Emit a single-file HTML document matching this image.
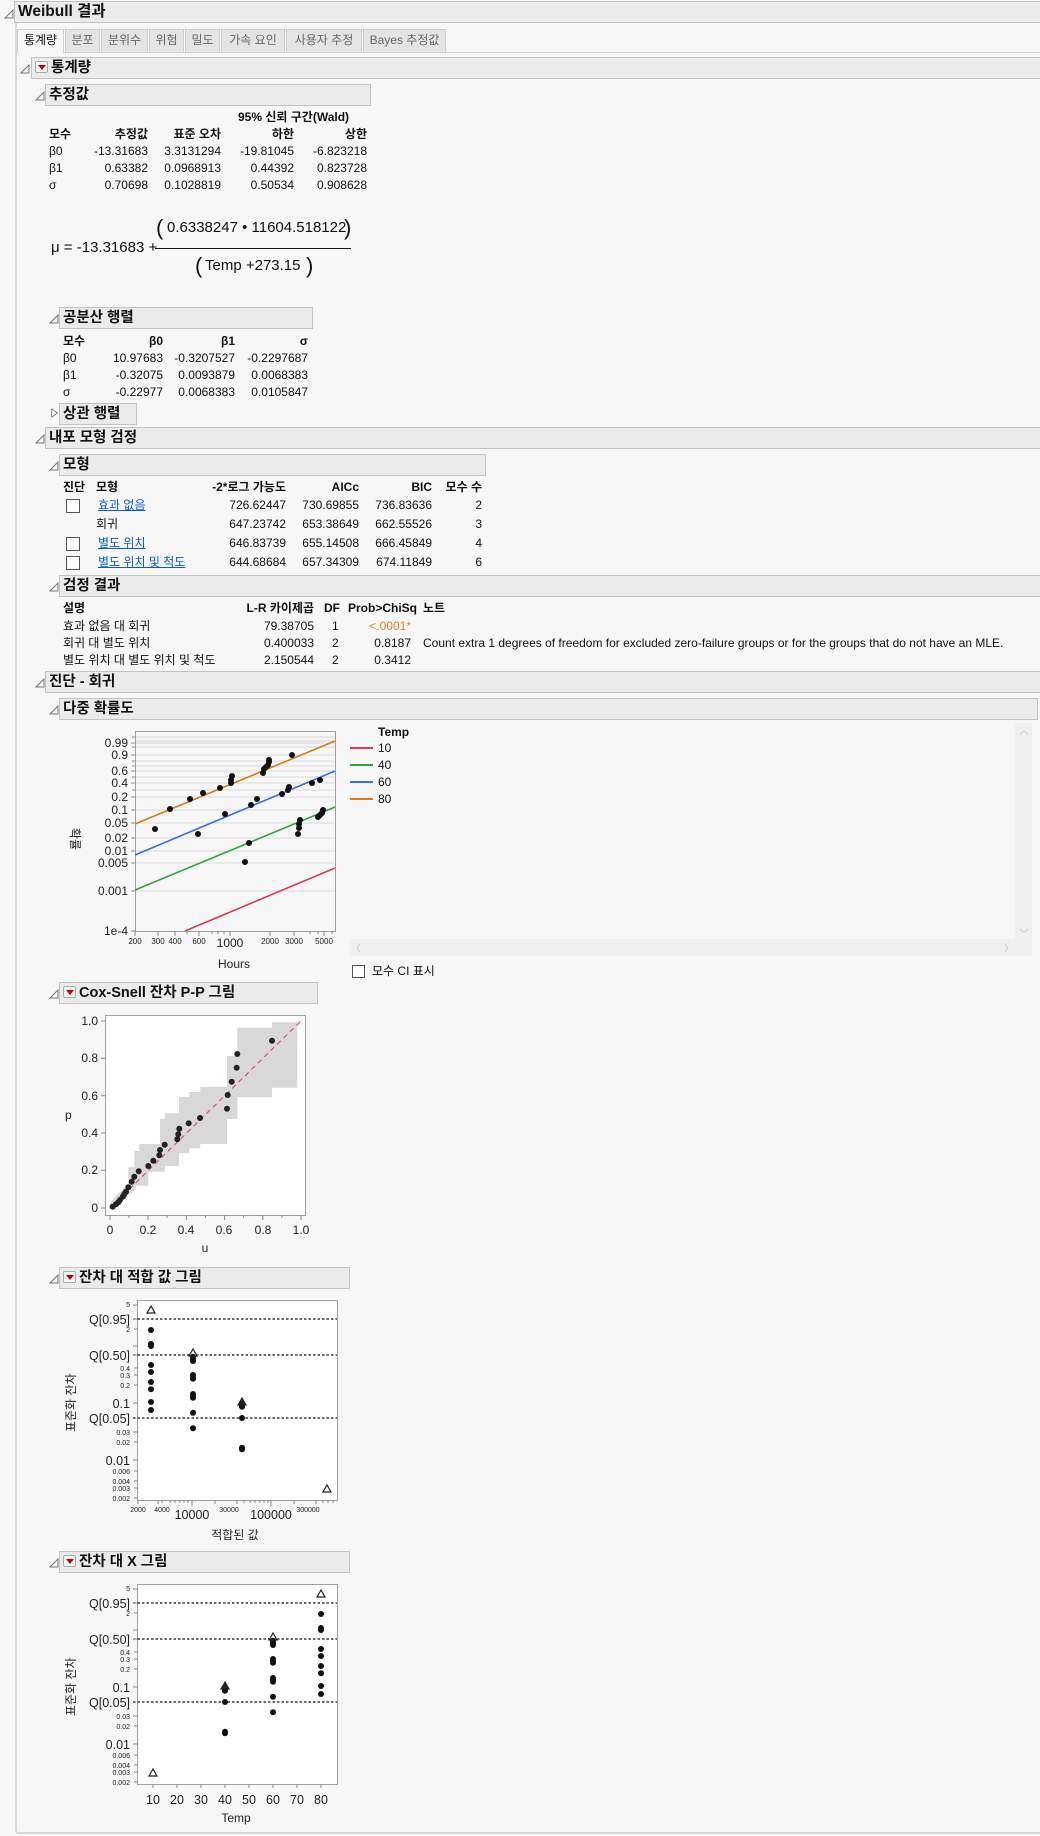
<!DOCTYPE html>
<html><head><meta charset="utf-8"><style>
*{margin:0;padding:0;box-sizing:border-box}
body{width:1040px;height:1836px;background:#f7f7f7;position:relative;overflow:hidden;font-family:"Liberation Sans","Noto Sans CJK KR",sans-serif;font-size:12px;color:#111}
.a{position:absolute;white-space:nowrap;line-height:16px}
.r{text-align:right;width:120px}
.c{text-align:center;width:60px}
.b{font-weight:bold}
.hd{position:absolute;height:22px;background:#ebebeb;border:1px solid #c3c3c3;font-weight:bold;font-size:14.5px;line-height:20px;padding-left:3px}
.tri{position:absolute;width:10px;height:10px}
.mb{display:inline-block;width:13px;height:12px;border:1px solid #aaa;background:#f8f8f8;border-radius:2px;position:relative;top:1px;margin-right:3px}
.mb:after{content:"";position:absolute;left:2px;top:3px;border-left:4px solid transparent;border-right:4px solid transparent;border-top:5px solid #c00000}
.tab{position:absolute;top:29px;height:23px;background:#e4e4e4;border:1px solid #cfcfcf;border-bottom:none;color:#666;font-size:12px;line-height:21px;text-align:center}
.cb{position:absolute;width:14px;height:14px;border:1px solid #555;background:#fff}
.lk{color:#0b5bd3;text-decoration:underline}
svg text{font-family:"Liberation Sans","Noto Sans CJK KR",sans-serif}
</style></head><body>

<div style="position:absolute;left:15px;top:22px;width:1030px;height:1812px;border-left:2px solid #d8d8d8;border-bottom:2px solid #d8d8d8;border-radius:0 0 0 4px"></div>
<div class="hd" style="left:14px;top:1px;width:1030px;height:22px;font-size:15.5px;line-height:20px">Weibull 결과</div>
<svg class="tri" style="left:4px;top:9px" viewBox="0 0 10 10"><path d="M9 1V9H1Z" fill="none" stroke="#777"/></svg>

<div style="position:absolute;left:17px;top:52px;width:1023px;border-top:1px solid #cfcfcf"></div>
<div class="tab" style="left:17px;width:47px;background:#f7f7f7;color:#111;height:24px">통계량</div>
<div class="tab" style="left:65px;width:35px">분포</div>
<div class="tab" style="left:101px;width:47px">분위수</div>
<div class="tab" style="left:149px;width:35px">위험</div>
<div class="tab" style="left:185px;width:35px">밀도</div>
<div class="tab" style="left:221px;width:64px">가속 요인</div>
<div class="tab" style="left:286px;width:76px">사용자 추정</div>
<div class="tab" style="left:363px;width:83px">Bayes 추정값</div>

<div class="hd" style="left:31px;top:57px;width:1012px"><span class="mb"></span>통계량</div>
<svg class="tri" style="left:20px;top:64px" viewBox="0 0 10 10"><path d="M9 1V9H1Z" fill="none" stroke="#777"/></svg>
<div class="hd" style="left:45px;top:84px;width:326px">추정값</div>
<svg class="tri" style="left:35px;top:91px" viewBox="0 0 10 10"><path d="M9 1V9H1Z" fill="none" stroke="#777"/></svg>

<div class="a b" style="left:238px;top:109px">95% 신뢰 구간(Wald)</div>
<div class="a b" style="left:49px;top:126px">모수</div>
<div class="a b r" style="left:28px;top:126px">추정값</div>
<div class="a b r" style="left:101px;top:126px">표준 오차</div>
<div class="a b r" style="left:174px;top:126px">하한</div>
<div class="a b r" style="left:247px;top:126px">상한</div>
<div class="a" style="left:49px;top:143px">β0</div><div class="a r" style="left:28px;top:143px">-13.31683</div><div class="a r" style="left:101px;top:143px">3.3131294</div><div class="a r" style="left:174px;top:143px">-19.81045</div><div class="a r" style="left:247px;top:143px">-6.823218</div>
<div class="a" style="left:49px;top:160px">β1</div><div class="a r" style="left:28px;top:160px">0.63382</div><div class="a r" style="left:101px;top:160px">0.0968913</div><div class="a r" style="left:174px;top:160px">0.44392</div><div class="a r" style="left:247px;top:160px">0.823728</div>
<div class="a" style="left:49px;top:177px">σ</div><div class="a r" style="left:28px;top:177px">0.70698</div><div class="a r" style="left:101px;top:177px">0.1028819</div><div class="a r" style="left:174px;top:177px">0.50534</div><div class="a r" style="left:247px;top:177px">0.908628</div>

<div class="a" style="left:51px;top:238px;font-size:15px;line-height:20px">μ = -13.31683 +</div>
<div style="position:absolute;left:155px;top:248px;width:196px;border-top:1px solid #111"></div>
<div class="a" style="left:156px;top:214px;font-size:22px;line-height:28px">(</div>
<div class="a" style="left:167px;top:218px;font-size:15px;line-height:20px">0.6338247 • 11604.518122</div>
<div class="a" style="left:344px;top:214px;font-size:22px;line-height:28px">)</div>
<div class="a" style="left:195px;top:252px;font-size:22px;line-height:28px">(</div>
<div class="a" style="left:205px;top:256px;font-size:15px;line-height:20px">Temp +273.15</div>
<div class="a" style="left:306px;top:252px;font-size:22px;line-height:28px">)</div>

<div class="hd" style="left:59px;top:307px;width:254px">공분산 행렬</div>
<svg class="tri" style="left:49px;top:314px" viewBox="0 0 10 10"><path d="M9 1V9H1Z" fill="none" stroke="#777"/></svg>
<div class="a b" style="left:63px;top:333px">모수</div><div class="a b r" style="left:43px;top:333px">β0</div><div class="a b r" style="left:115px;top:333px">β1</div><div class="a b r" style="left:188px;top:333px">σ</div>
<div class="a" style="left:63px;top:350px">β0</div><div class="a r" style="left:43px;top:350px">10.97683</div><div class="a r" style="left:115px;top:350px">-0.3207527</div><div class="a r" style="left:188px;top:350px">-0.2297687</div>
<div class="a" style="left:63px;top:367px">β1</div><div class="a r" style="left:43px;top:367px">-0.32075</div><div class="a r" style="left:115px;top:367px">0.0093879</div><div class="a r" style="left:188px;top:367px">0.0068383</div>
<div class="a" style="left:63px;top:384px">σ</div><div class="a r" style="left:43px;top:384px">-0.22977</div><div class="a r" style="left:115px;top:384px">0.0068383</div><div class="a r" style="left:188px;top:384px">0.0105847</div>

<div class="hd" style="left:59px;top:403px;width:78px">상관 행렬</div>
<svg class="tri" style="left:50px;top:408px" viewBox="0 0 10 12"><path d="M1 1L8 6L1 11Z" fill="none" stroke="#777"/></svg>

<div class="hd" style="left:45px;top:427px;width:998px">내포 모형 검정</div>
<svg class="tri" style="left:35px;top:434px" viewBox="0 0 10 10"><path d="M9 1V9H1Z" fill="none" stroke="#777"/></svg>
<div class="hd" style="left:59px;top:454px;width:427px">모형</div>
<svg class="tri" style="left:49px;top:461px" viewBox="0 0 10 10"><path d="M9 1V9H1Z" fill="none" stroke="#777"/></svg>

<div class="a b" style="left:63px;top:479px">진단</div><div class="a b" style="left:96px;top:479px">모형</div>
<div class="a b r" style="left:166px;top:479px">-2*로그 가능도</div><div class="a b r" style="left:239px;top:479px">AICc</div><div class="a b r" style="left:312px;top:479px">BIC</div><div class="a b r" style="left:362px;top:479px">모수 수</div>
<div class="cb" style="left:66px;top:499px"></div><div class="a lk" style="left:98px;top:497px">효과 없음</div><div class="a r" style="left:166px;top:497px">726.62447</div><div class="a r" style="left:239px;top:497px">730.69855</div><div class="a r" style="left:312px;top:497px">736.83636</div><div class="a r" style="left:362px;top:497px">2</div>
<div class="a" style="left:96px;top:516px">회귀</div><div class="a r" style="left:166px;top:516px">647.23742</div><div class="a r" style="left:239px;top:516px">653.38649</div><div class="a r" style="left:312px;top:516px">662.55526</div><div class="a r" style="left:362px;top:516px">3</div>
<div class="cb" style="left:66px;top:537px"></div><div class="a lk" style="left:98px;top:535px">별도 위치</div><div class="a r" style="left:166px;top:535px">646.83739</div><div class="a r" style="left:239px;top:535px">655.14508</div><div class="a r" style="left:312px;top:535px">666.45849</div><div class="a r" style="left:362px;top:535px">4</div>
<div class="cb" style="left:66px;top:556px"></div><div class="a lk" style="left:98px;top:554px">별도 위치 및 척도</div><div class="a r" style="left:166px;top:554px">644.68684</div><div class="a r" style="left:239px;top:554px">657.34309</div><div class="a r" style="left:312px;top:554px">674.11849</div><div class="a r" style="left:362px;top:554px">6</div>

<div class="hd" style="left:59px;top:575px;width:984px">검정 결과</div>
<svg class="tri" style="left:49px;top:582px" viewBox="0 0 10 10"><path d="M9 1V9H1Z" fill="none" stroke="#777"/></svg>
<div class="a b" style="left:63px;top:600px">설명</div><div class="a b r" style="left:194px;top:600px">L-R 카이제곱</div><div class="a b" style="left:324px;top:600px">DF</div><div class="a b" style="left:348px;top:600px">Prob&gt;ChiSq</div><div class="a b" style="left:423px;top:600px">노트</div>
<div class="a" style="left:63px;top:618px">효과 없음 대 회귀</div><div class="a r" style="left:194px;top:618px">79.38705</div><div class="a" style="left:332px;top:618px">1</div><div class="a r" style="left:291px;top:618px;color:#e8782a">&lt;.0001*</div>
<div class="a" style="left:63px;top:635px">회귀 대 별도 위치</div><div class="a r" style="left:194px;top:635px">0.400033</div><div class="a" style="left:332px;top:635px">2</div><div class="a r" style="left:291px;top:635px">0.8187</div><div class="a" style="left:423px;top:635px">Count extra 1 degrees of freedom for excluded zero-failure groups or for the groups that do not have an MLE.</div>
<div class="a" style="left:63px;top:652px">별도 위치 대 별도 위치 및 척도</div><div class="a r" style="left:194px;top:652px">2.150544</div><div class="a" style="left:332px;top:652px">2</div><div class="a r" style="left:291px;top:652px">0.3412</div>

<div class="hd" style="left:45px;top:671px;width:998px">진단 - 회귀</div>
<svg class="tri" style="left:35px;top:678px" viewBox="0 0 10 10"><path d="M9 1V9H1Z" fill="none" stroke="#777"/></svg>
<div class="hd" style="left:59px;top:698px;width:979px">다중 확률도</div>
<svg class="tri" style="left:49px;top:705px" viewBox="0 0 10 10"><path d="M9 1V9H1Z" fill="none" stroke="#777"/></svg>

<svg style="position:absolute;left:0;top:0" width="1040" height="1836">
<g stroke="#d9d9d9" stroke-width="1">
<path d="M135 737H335M135 741H335M135 743H335M135 747H335M135 755H335M135 761H335M135 766H335M135 771H335M135 777H335M135 783H335M135 790H335M135 797H335M135 810H335M135 823H335M135 838H335M135 851H335M135 863H335M135 891H335"/>
</g>
<rect x="135.5" y="731.5" width="200" height="200" fill="none" stroke="#a0a0a0"/>
<g stroke="#888"><path d="M131 743H135M131 755H135M131 771H135M131 783H135M131 797H135M131 810H135M131 823H135M131 838H135M131 851H135M131 863H135M131 891H135M131 931H135M132 737H135M132 747H135M132 761H135M132 766H135M132 777H135M132 790H135M158 931V936M175 931V936M199 931V936M230 931V936M270 931V936M294 931V936M324 931V936M135 931V936M187 931v3M212 931v3M218 931v3M224 931v3M310 931v3M318 931v3M332 931v3"/></g>
<g font-size="12" fill="#222" text-anchor="end">
<text x="128" y="747">0.99</text><text x="128" y="759">0.9</text><text x="128" y="775">0.6</text><text x="128" y="787">0.4</text><text x="128" y="801">0.2</text><text x="128" y="814">0.1</text><text x="128" y="827">0.05</text><text x="128" y="842">0.02</text><text x="128" y="855">0.01</text><text x="128" y="867">0.005</text><text x="128" y="895">0.001</text><text x="128" y="935">1e-4</text>
</g>
<g font-size="8" fill="#222" text-anchor="middle"><text x="135" y="944">200</text><text x="158" y="944">300</text><text x="175" y="944">400</text><text x="199" y="944">600</text><text x="270" y="944">2000</text><text x="294" y="944">3000</text><text x="324" y="944">5000</text></g>
<text x="230" y="947" font-size="12" text-anchor="middle" fill="#222">1000</text>
<text x="234" y="968" font-size="12" text-anchor="middle" fill="#222">Hours</text>
<text x="70" y="835" font-size="12" fill="#222" transform="rotate(90 74 832)">확률</text>
<g stroke-width="1.6"><path d="M135 824L335 741" stroke="#d87a1e"/><path d="M135 855L335 771" stroke="#3c6fe0"/><path d="M135 890L335 807" stroke="#2ea63a"/><path d="M185 931L335 868" stroke="#dc3a50"/></g>
<g fill="#111">
<circle cx="155" cy="829" r="3"/><circle cx="170" cy="809" r="3"/><circle cx="190" cy="799" r="3"/><circle cx="203" cy="793" r="3"/><circle cx="220" cy="788" r="3"/><circle cx="231" cy="783" r="3"/><circle cx="231" cy="780" r="3"/><circle cx="232" cy="776" r="3"/><circle cx="263" cy="773" r="3"/><circle cx="264" cy="769" r="3"/><circle cx="266" cy="767" r="3"/><circle cx="268" cy="765" r="3"/><circle cx="269" cy="762" r="3"/><circle cx="269" cy="760" r="3"/><circle cx="292" cy="755" r="3"/>
<circle cx="198" cy="834" r="3"/><circle cx="225" cy="814" r="3"/><circle cx="251" cy="805" r="3"/><circle cx="257" cy="799" r="3"/><circle cx="282" cy="794" r="3"/><circle cx="288" cy="790" r="3"/><circle cx="289" cy="787" r="3"/><circle cx="312" cy="783" r="3"/><circle cx="320" cy="780" r="3"/>
<circle cx="245" cy="862" r="3"/><circle cx="249" cy="843" r="3"/><circle cx="298" cy="834" r="3"/><circle cx="299" cy="828" r="3"/><circle cx="299" cy="824" r="3"/><circle cx="300" cy="820" r="3"/><circle cx="318" cy="817" r="3"/><circle cx="320" cy="815" r="3"/><circle cx="322" cy="813" r="3"/><circle cx="323" cy="810" r="3"/>
</g>
<text x="378" y="736" font-size="12" font-weight="bold" fill="#111">Temp</text>
<g stroke-width="2"><path d="M350 748H373" stroke="#dc3a50"/><path d="M350 765H373" stroke="#2ea63a"/><path d="M350 782H373" stroke="#3c6fe0"/><path d="M350 799H373" stroke="#d87a1e"/></g>
<g font-size="12" fill="#111"><text x="378" y="752">10</text><text x="378" y="769">40</text><text x="378" y="786">60</text><text x="378" y="803">80</text></g>
<rect x="1015" y="723" width="17" height="216" fill="#f0f0f0"/><rect x="349" y="939" width="683" height="17" fill="#f0f0f0"/>
<path d="M1020 734l4-3 4 3M1020 929l4 3 4-3M360 944l-3 4 3 4M1005 944l3 4-3 4" fill="none" stroke="#ccc"/>
</svg>
<div class="cb" style="left:352px;top:965px;width:13px;height:13px"></div>
<div class="a" style="left:372px;top:963px">모수 CI 표시</div>

<div class="hd" style="left:59px;top:982px;width:259px"><span class="mb"></span>Cox-Snell 잔차 P-P 그림</div>
<svg class="tri" style="left:49px;top:989px" viewBox="0 0 10 10"><path d="M9 1V9H1Z" fill="none" stroke="#777"/></svg>
<svg style="position:absolute;left:0;top:970px" width="400" height="300">
<rect x="105.5" y="45.5" width="200" height="200" fill="#fff" stroke="#a0a0a0"/>
<polygon fill="#d8d8d8" points="110,233.3 115,226.7 120,221.7 128.3,213.3 128.3,197.3 134.3,197.3 134.3,181 139.3,181 139.3,174 160,174 160,149 165,149 165,143.3 179,143.3 179,127 189.3,127 189.3,122 200.3,122 200.3,117 227,117 227,86 237.3,86 237.3,57.7 272,57.7 272,52.3 297.3,52.3 297.3,117.7 272,117.7 272,127 237.3,127 237.3,149 227,149 227,174 200.3,174 200.3,178.3 189.3,178.3 189.3,183.3 179,183.3 179,196 165,196 165,201.7 148.3,201.7 148.3,215.7 136.7,215.7 133.3,221.7 123.3,230 115,237.3 110,238.3"/>
<path d="M110 238L301 51" stroke="#e0506a" stroke-width="1.2" stroke-dasharray="5 4"/>
<g fill="#222">
<circle cx="112.7" cy="236.7" r="3"/><circle cx="116" cy="234.3" r="3"/><circle cx="118.3" cy="232.3" r="3"/><circle cx="120" cy="230" r="3"/><circle cx="122.7" cy="226.7" r="3"/><circle cx="124.3" cy="224" r="3"/><circle cx="126" cy="221.7" r="3"/><circle cx="128.3" cy="217.3" r="3"/><circle cx="131.7" cy="211.7" r="3"/><circle cx="134.3" cy="206.7" r="3"/><circle cx="138.7" cy="201.3" r="3"/><circle cx="148.3" cy="196" r="3"/><circle cx="153.3" cy="190.7" r="3"/><circle cx="159.3" cy="185.3" r="3"/><circle cx="160" cy="180" r="3"/><circle cx="164.7" cy="174.7" r="3"/><circle cx="177.3" cy="169.3" r="3"/><circle cx="178.3" cy="164.3" r="3"/><circle cx="179.3" cy="158.7" r="3"/><circle cx="188.7" cy="153.3" r="3"/><circle cx="200" cy="148" r="3"/><circle cx="227" cy="138.7" r="3"/><circle cx="227.7" cy="125" r="3"/><circle cx="231.7" cy="111.7" r="3"/><circle cx="236.7" cy="97.7" r="3"/><circle cx="237.3" cy="84" r="3"/><circle cx="272" cy="70.7" r="3"/>
</g>
<g stroke="#888"><path d="M101 51H105M101 88.3H105M101 125.7H105M101 163H105M101 200.3H105M101 238H105M110 245V250M148 245V250M186.4 245V250M224.6 245V250M262.8 245V250M301 245V250M129 245v3M167 245v3M205.5 245v3M243.7 245v3M282 245v3"/></g>
<g font-size="12" fill="#222" text-anchor="end"><text x="98" y="55">1.0</text><text x="98" y="92">0.8</text><text x="98" y="130">0.6</text><text x="98" y="167">0.4</text><text x="98" y="204">0.2</text><text x="98" y="242">0</text></g>
<g font-size="12" fill="#222" text-anchor="middle"><text x="110" y="264">0</text><text x="148" y="264">0.2</text><text x="186" y="264">0.4</text><text x="224" y="264">0.6</text><text x="263" y="264">0.8</text><text x="301" y="264">1.0</text><text x="205" y="282">u</text></g>
<text x="65" y="149" font-size="12" fill="#222">p</text>
</svg>

<div class="hd" style="left:59px;top:1267px;width:291px"><span class="mb"></span>잔차 대 적합 값 그림</div>
<svg class="tri" style="left:49px;top:1274px" viewBox="0 0 10 10"><path d="M9 1V9H1Z" fill="none" stroke="#777"/></svg>
<svg style="position:absolute;left:0;top:1260px" width="400" height="290">
<rect x="137.5" y="40.5" width="200" height="200" fill="#fff" stroke="#a0a0a0"/>
<g stroke="#111" stroke-dasharray="2.5 2" stroke-width="1.2"><path d="M133 59H337M133 95H337M133 158H337"/></g>
<g stroke="#888"><path d="M133 45H137M133 59H137M134 69H137M133 86H137M133 95H137M134 108H137M134 115H137M134 125H137M133 143H137M133 172H137M134 182H137M133 200H137M134 211H137M134 221H137M134 228H137M134 238H137M138 240v4M158 240v4M192 240v6M215 240v4M237 240v4M271 240v6M294 240v4M316 240v4M162 240v3M170 240v3M175 240v3M180 240v3M184 240v3M188 240v3M244 240v3M250 240v3M255 240v3M260 240v3M264 240v3M268 240v3M323 240v3M328 240v3M333 240v3"/></g>
<g fill="#222" text-anchor="end"><text x="130" y="64" font-size="12.5">Q[0.95]</text><text x="130" y="100" font-size="12.5">Q[0.50]</text><text x="130" y="163" font-size="12.5">Q[0.05]</text><text x="130" y="148" font-size="12.5">0.1</text><text x="130" y="205" font-size="12.5">0.01</text>
<g font-size="7"><text x="130" y="47">5</text><text x="130" y="72">2</text><text x="130" y="111">0.4</text><text x="130" y="118">0.3</text><text x="130" y="128">0.2</text><text x="130" y="175">0.03</text><text x="130" y="185">0.02</text><text x="130" y="214">0.006</text><text x="130" y="224">0.004</text><text x="130" y="231">0.003</text><text x="130" y="241">0.002</text></g></g>
<g fill="#222" text-anchor="middle"><g font-size="7"><text x="138" y="252">2000</text><text x="162" y="252">4000</text><text x="229" y="252">30000</text><text x="308" y="252">300000</text></g><text x="192" y="259" font-size="12.5">10000</text><text x="271" y="259" font-size="12.5">100000</text><text x="235" y="279" font-size="12">적합된 값</text></g>
<text x="0" y="0" font-size="12" fill="#222" transform="translate(75 172) rotate(-90)">표준화 잔차</text>
<g fill="#111"><circle cx="151" cy="70" r="3"/><circle cx="151" cy="84" r="3"/><circle cx="151" cy="86" r="3"/><circle cx="151" cy="105" r="3"/><circle cx="151" cy="112" r="3"/><circle cx="151" cy="122" r="3"/><circle cx="151" cy="129.3" r="3"/><circle cx="151" cy="142" r="3"/><circle cx="151" cy="150" r="3"/>
<circle cx="193" cy="96.7" r="3"/><circle cx="193" cy="99.3" r="3"/><circle cx="193" cy="101" r="3"/><circle cx="193" cy="115" r="3"/><circle cx="193" cy="117.3" r="3"/><circle cx="193" cy="118.7" r="3"/><circle cx="193" cy="134" r="3"/><circle cx="193" cy="136" r="3"/><circle cx="193" cy="137.7" r="3"/><circle cx="193" cy="152.7" r="3"/><circle cx="193" cy="168.3" r="3"/>
<circle cx="242" cy="145.3" r="3"/><circle cx="242" cy="146.7" r="3"/><circle cx="242" cy="158" r="3"/><circle cx="242" cy="187.7" r="3"/><circle cx="242" cy="189.3" r="3"/></g>
<g fill="none" stroke="#222" stroke-width="1.2"><path d="M151 46l-4 7h8z"/><path d="M193 89l-4 7h8z"/><path d="M242 138l-4 7h8z" fill="#222"/><path d="M327 225l-4 7h8z"/></g>
</svg>

<div class="hd" style="left:59px;top:1551px;width:291px"><span class="mb"></span>잔차 대 X 그림</div>
<svg class="tri" style="left:49px;top:1558px" viewBox="0 0 10 10"><path d="M9 1V9H1Z" fill="none" stroke="#777"/></svg>
<svg style="position:absolute;left:0;top:1544px" width="400" height="290">
<rect x="137.5" y="40.5" width="200" height="200" fill="#fff" stroke="#a0a0a0"/>
<g stroke="#111" stroke-dasharray="2.5 2" stroke-width="1.2"><path d="M133 59H337M133 95H337M133 158H337"/></g>
<g stroke="#888"><path d="M133 45H137M133 59H137M134 69H137M133 86H137M133 95H137M134 108H137M134 115H137M134 125H137M133 143H137M133 172H137M134 182H137M133 200H137M134 211H137M134 221H137M134 228H137M134 238H137M153 240v4M177 240v4M201 240v4M225 240v4M249 240v4M273 240v4M297 240v4M321 240v4"/></g>
<g fill="#222" text-anchor="end"><text x="130" y="64" font-size="12.5">Q[0.95]</text><text x="130" y="100" font-size="12.5">Q[0.50]</text><text x="130" y="163" font-size="12.5">Q[0.05]</text><text x="130" y="148" font-size="12.5">0.1</text><text x="130" y="205" font-size="12.5">0.01</text>
<g font-size="7"><text x="130" y="47">5</text><text x="130" y="72">2</text><text x="130" y="111">0.4</text><text x="130" y="118">0.3</text><text x="130" y="128">0.2</text><text x="130" y="175">0.03</text><text x="130" y="185">0.02</text><text x="130" y="214">0.006</text><text x="130" y="224">0.004</text><text x="130" y="231">0.003</text><text x="130" y="241">0.002</text></g></g>
<g fill="#222" text-anchor="middle" font-size="12.5"><text x="153" y="260">10</text><text x="177" y="260">20</text><text x="201" y="260">30</text><text x="225" y="260">40</text><text x="249" y="260">50</text><text x="273" y="260">60</text><text x="297" y="260">70</text><text x="321" y="260">80</text><text x="236" y="278" font-size="12">Temp</text></g>
<text x="0" y="0" font-size="12" fill="#222" transform="translate(75 172) rotate(-90)">표준화 잔차</text>
<g fill="#111"><circle cx="321" cy="70" r="3"/><circle cx="321" cy="84" r="3"/><circle cx="321" cy="86" r="3"/><circle cx="321" cy="105" r="3"/><circle cx="321" cy="112" r="3"/><circle cx="321" cy="122" r="3"/><circle cx="321" cy="129.3" r="3"/><circle cx="321" cy="142" r="3"/><circle cx="321" cy="150" r="3"/>
<circle cx="273" cy="96.7" r="3"/><circle cx="273" cy="99.3" r="3"/><circle cx="273" cy="101" r="3"/><circle cx="273" cy="115" r="3"/><circle cx="273" cy="117.3" r="3"/><circle cx="273" cy="118.7" r="3"/><circle cx="273" cy="134" r="3"/><circle cx="273" cy="136" r="3"/><circle cx="273" cy="137.7" r="3"/><circle cx="273" cy="152.7" r="3"/><circle cx="273" cy="168.3" r="3"/>
<circle cx="225" cy="145.3" r="3"/><circle cx="225" cy="146.7" r="3"/><circle cx="225" cy="158" r="3"/><circle cx="225" cy="187.7" r="3"/><circle cx="225" cy="189.3" r="3"/></g>
<g fill="none" stroke="#222" stroke-width="1.2"><path d="M321 46l-4 7h8z"/><path d="M273 89l-4 7h8z"/><path d="M225 138l-4 7h8z" fill="#222"/><path d="M153 225l-4 7h8z"/></g>
</svg>
</body></html>
